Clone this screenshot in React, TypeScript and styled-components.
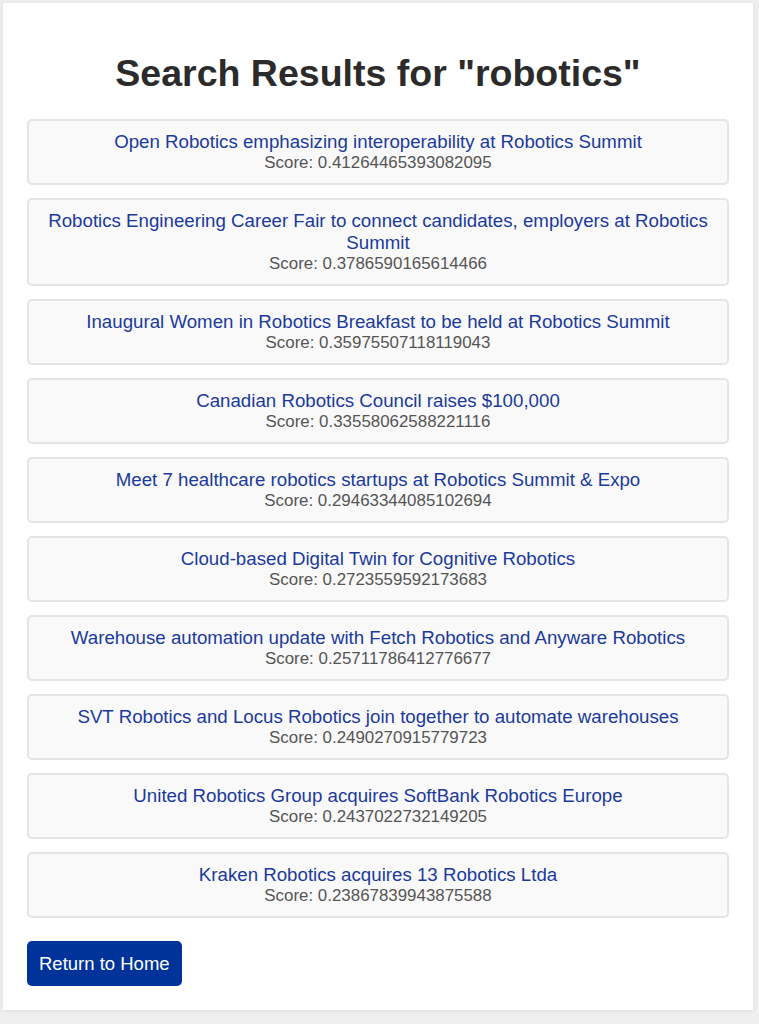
import React from "react";
import styled, { createGlobalStyle } from "styled-components";

const GlobalStyle = createGlobalStyle`
  html, body {
    margin: 0;
    padding: 0;
    background: #efefef;
    font-family: "Liberation Sans", Arial, sans-serif;
  }
`;

const Page = styled.div`
  padding: 3px 6px 14px 3px;
`;

const Container = styled.main`
  width: 750px;
  box-sizing: border-box;
  background: #ffffff;
  padding: 24px 24px 24px;
  box-shadow: 0 1px 5px rgba(0, 0, 0, 0.08);
`;

const Heading = styled.h1`
  margin: 26px 0 26px;
  text-align: center;
  font-size: 37.5px;
  line-height: 40px;
  font-weight: 700;
  color: #2b2b2b;
`;

const ResultList = styled.ul`
  list-style: none;
  margin: 0;
  padding: 0;
  display: flex;
  flex-direction: column;
  gap: 13px;
`;

const ResultCard = styled.li`
  box-sizing: border-box;
  background: #f9f9f9;
  border: 2px solid #e5e5e5;
  border-radius: 5px;
  padding: 10px 16px;
  text-align: center;
`;

const ResultLink = styled.a`
  display: block;
  color: #1b3a9c;
  text-decoration: none;
  font-size: 18.7px;
  line-height: 22px;
`;

const Score = styled.div`
  color: #555555;
  font-size: 16.9px;
  line-height: 20px;
`;

const HomeButton = styled.button`
  margin-top: 23px;
  height: 45px;
  padding: 0 12px;
  background: #003399;
  color: #ffffff;
  border: none;
  border-radius: 5px;
  font-family: "Liberation Sans", Arial, sans-serif;
  font-size: 18.5px;
  cursor: pointer;
`;

const results = [
  ["Open Robotics emphasizing interoperability at Robotics Summit", "0.41264465393082095"],
  ["Robotics Engineering Career Fair to connect candidates, employers at Robotics Summit", "0.3786590165614466"],
  ["Inaugural Women in Robotics Breakfast to be held at Robotics Summit", "0.35975507118119043"],
  ["Canadian Robotics Council raises $100,000", "0.33558062588221116"],
  ["Meet 7 healthcare robotics startups at Robotics Summit & Expo", "0.29463344085102694"],
  ["Cloud-based Digital Twin for Cognitive Robotics", "0.2723559592173683"],
  ["Warehouse automation update with Fetch Robotics and Anyware Robotics", "0.25711786412776677"],
  ["SVT Robotics and Locus Robotics join together to automate warehouses", "0.2490270915779723"],
  ["United Robotics Group acquires SoftBank Robotics Europe", "0.2437022732149205"],
  ["Kraken Robotics acquires 13 Robotics Ltda", "0.23867839943875588"],
];

export default function App() {
  return (
    <>
      <GlobalStyle />
      <Page>
        <Container>
          <Heading>Search Results for "robotics"</Heading>
          <ResultList>
            {results.map(([title, score]) => (
              <ResultCard key={title}>
                <ResultLink href="#">{title}</ResultLink>
                <Score>Score: {score}</Score>
              </ResultCard>
            ))}
          </ResultList>
          <HomeButton>Return to Home</HomeButton>
        </Container>
      </Page>
    </>
  );
}
